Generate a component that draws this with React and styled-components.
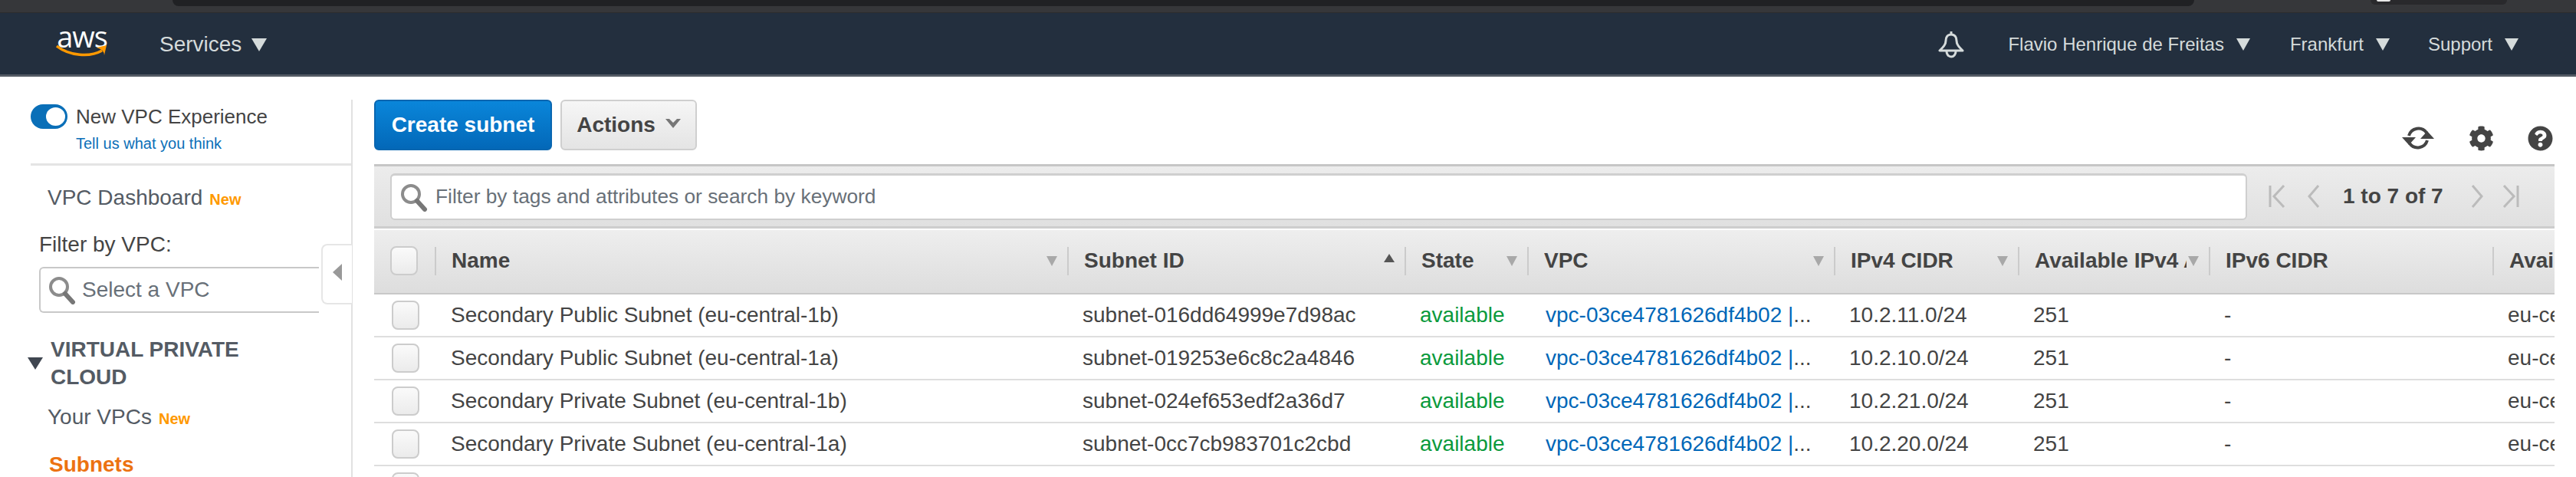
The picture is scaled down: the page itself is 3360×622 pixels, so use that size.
import React from 'react';
import styled, { createGlobalStyle } from 'styled-components';
import { FaCog, FaQuestionCircle } from 'react-icons/fa';

const GlobalStyle = createGlobalStyle`
  html, body {
    margin: 0;
    padding: 0;
    width: 3360px;
    height: 622px;
    overflow: hidden;
    background: #fff;
  }
  body {
    font-family: "Liberation Sans", Arial, sans-serif;
    color: #444;
  }
  * {
    box-sizing: border-box;
  }
`;

const Page = styled.div`
  width: 3360px;
  height: 622px;
  overflow: hidden;
  display: flex;
  flex-direction: column;
`;

// bit of the browser window that is left above the console
const BrowserStrip = styled.div`
  height: 17px;
  flex: none;
  background: #36373a;
  border-bottom: 1px solid #2b2c2e;
  display: flex;
  align-items: flex-start;
`;

const BrowserTab = styled.div`
  height: ${(p) => p.$height}px;
  background: ${(p) => p.$color};
  margin-left: ${(p) => p.$left}px;
  width: ${(p) => p.$width}px;
  border-radius: 0 0 12px 12px;
  padding-left: 8px;
`;

const TabGlint = styled.span`
  display: block;
  width: 18px;
  height: 2px;
  background: #e8e8e8;
  border-radius: 0 0 9px 9px;
`;

const Nav = styled.header`
  height: 83px;
  flex: none;
  background: #232f3e;
  border-bottom: 3px solid #545b64;
  padding-top: 2px;
  display: flex;
  align-items: center;
  color: #d5dbdb;
`;

const Logo = styled.div`
  width: 70px;
  margin-left: 72px;
  margin-right: 66px;
  display: flex;
  flex-direction: column;
  align-items: center;
  position: relative;
  top: -3px;
`;

const LogoWord = styled.span`
  font-family: "Open Sans", sans-serif;
  font-size: 38px;
  line-height: 26px;
  height: 24px;
  color: #fff;
  letter-spacing: -1px;
`;

const NavItem = styled.div`
  display: flex;
  align-items: center;
  gap: ${(p) => (p.$big ? 13 : 16)}px;
  font-size: ${(p) => (p.$big ? 28 : 24)}px;
  margin-left: ${(p) => p.$gap || 0}px;
`;

const Caret = styled.span`
  width: 0;
  height: 0;
  flex: none;
  border-left: ${(p) => p.$w / 2}px solid transparent;
  border-right: ${(p) => p.$w / 2}px solid transparent;
  border-top: ${(p) => p.$h}px solid ${(p) => p.$color || '#d5dbdb'};
`;

const NavSpacer = styled.div`
  flex: 1;
`;

const Bell = styled.svg`
  width: 36px;
  height: 36px;
  margin-right: 56px;
`;

const NavEnd = styled.div`
  width: 75px;
`;

const Content = styled.div`
  flex: 1;
  min-height: 0;
  display: flex;
  overflow: hidden;
`;

const Sidebar = styled.aside`
  width: 460px;
  flex: none;
  margin-top: 30px;
  border-right: 2px solid #e1e1e1;
  position: relative;
`;

const Experience = styled.div`
  margin-left: 40px;
  height: 86px;
  border-bottom: 3px solid #e4e4e4;
  display: grid;
  grid-template-columns: 48px 1fr;
  grid-auto-rows: min-content;
  column-gap: 11px;
  padding-top: 6px;
`;

const Toggle = styled.span`
  width: 48px;
  height: 32px;
  border-radius: 16px;
  background: #0a6fb8;
  display: flex;
  justify-content: flex-end;
  align-items: center;
  padding-right: 3px;
`;

const ToggleKnob = styled.span`
  width: 25px;
  height: 24px;
  border-radius: 50%;
  background: #fff;
`;

const ExperienceTitle = styled.div`
  font-size: 26px;
  line-height: 32px;
  color: #444;
`;

const FeedbackLink = styled.a`
  grid-column: 2;
  font-size: 20px;
  line-height: 24px;
  margin-top: 7px;
  color: #0a6fb8;
`;

const NavLink = styled.div`
  font-size: 28px;
  line-height: 32px;
  color: ${(p) => (p.$active ? '#ec7211' : '#545b64')};
  font-weight: ${(p) => (p.$active ? 700 : 400)};
  margin-left: ${(p) => (p.$active ? 64 : 62)}px;
  margin-top: ${(p) => p.$top}px;
`;

const NewTag = styled.span`
  font-size: 20px;
  font-weight: 700;
  color: #ff9900;
  margin-left: 9px;
`;

const FilterLabel = styled.div`
  font-size: 28px;
  line-height: 32px;
  color: #444;
  margin: 27px 0 13px 51px;
`;

const VpcSelect = styled.div`
  margin-left: 51px;
  width: 365px;
  height: 60px;
  border: 2px solid #c8c8c8;
  border-right: none;
  border-radius: 6px 0 0 6px;
  display: flex;
  align-items: center;
  padding-left: 9px;
  gap: 7px;
  font-size: 28px;
  color: #687078;
`;

const CollapseTab = styled.div`
  position: absolute;
  left: 419px;
  top: 188px;
  width: 40px;
  height: 79px;
  background: #fff;
  border: 2px solid #e6e6e6;
  border-right: none;
  border-radius: 8px 0 0 8px;
  display: flex;
  align-items: center;
  justify-content: center;
`;

const CollapseArrow = styled.span`
  width: 0;
  height: 0;
  border-top: 11px solid transparent;
  border-bottom: 11px solid transparent;
  border-right: 12px solid #999;
  margin-top: -6px;
`;

const Section = styled.div`
  margin: 30px 0 0 36px;
  display: flex;
  align-items: center;
  gap: 10px;
`;

const SectionTitle = styled.div`
  font-size: 28px;
  font-weight: 700;
  line-height: 36px;
  color: #545b64;
  width: 300px;
`;

const Main = styled.main`
  margin-left: 28px;
  width: 2844px;
  flex: none;
  padding-top: 30px;
`;

const Toolbar = styled.div`
  display: flex;
  align-items: flex-start;
  gap: 11px;
  height: 66px;
`;

const PrimaryButton = styled.button`
  width: 232px;
  height: 66px;
  border: 2px solid #0a66b0;
  border-radius: 6px;
  background: linear-gradient(#0a86da, #0368b8);
  color: #fff;
  font: 700 28px "Liberation Sans", Arial, sans-serif;
  padding: 0;
`;

const SecondaryButton = styled.button`
  width: 178px;
  height: 66px;
  border: 2px solid #cfcfcf;
  border-radius: 6px;
  background: linear-gradient(#f6f6f6, #e4e4e4);
  color: #444;
  font: 700 28px "Liberation Sans", Arial, sans-serif;
  display: flex;
  align-items: center;
  justify-content: center;
  gap: 13px;
  padding: 0;
`;

const Chevron = styled.svg`
  width: 20px;
  height: 13px;
  margin-top: -6px;
`;

const ToolIcons = styled.div`
  margin-left: auto;
  display: flex;
  align-items: center;
  height: 66px;
  padding-top: 34px;
  padding-right: 2px;
  color: #444;
  gap: 44px;
  font-size: 33px;
`;

const RefreshIcon = styled.svg`
  width: 44px;
  height: 36px;
`;

const FilterBar = styled.div`
  margin-top: 18px;
  height: 84px;
  background: linear-gradient(#ececec, #e0e0e0);
  border-top: 3px solid #c6c6c6;
  border-bottom: 3px solid #cdcdcd;
  display: flex;
  align-items: center;
  padding-left: 21px;
`;

const SearchBox = styled.div`
  width: 2422px;
  height: 61px;
  background: #fff;
  border: 2px solid #cfcfcf;
  border-top-width: 3px;
  border-radius: 6px;
  display: flex;
  align-items: center;
  padding-left: 10px;
  gap: 9px;
  font-size: 26.3px;
  color: #687078;
`;

const SearchSvg = styled.svg`
  width: 38px;
  height: 38px;
  flex: none;
`;

const Pager = styled.div`
  flex: 1;
  display: flex;
  align-items: center;
  padding-left: 28px;
  font-size: 28px;
  font-weight: 700;
  color: #444;
`;

const PagerCount = styled.span`
  margin: 0 35px 0 29px;
`;

const PagerIcon = styled.svg`
  width: ${(p) => p.$w}px;
  height: 30px;
  margin-left: ${(p) => p.$left}px;
`;

const columns = '79px 825px 440px 160px 400px 240px 249px 370px 200px';

const HeaderRow = styled.div`
  margin-top: 2px;
  height: 84px;
  display: grid;
  grid-template-columns: ${columns};
  align-items: center;
  background: linear-gradient(#eeeeee, #dddddd);
  border-bottom: 2px solid #c8c8c8;
  overflow: hidden;
  padding-bottom: 2px;
`;

const HeadCell = styled.div`
  height: 37px;
  border-left: 2px solid #cbcbcb;
  padding: 0 13px 0 20px;
  display: flex;
  align-items: center;
  gap: 2px;
  font-size: 28px;
  font-weight: 700;
  color: #444;
`;

const HeadLabel = styled.span`
  flex: 1;
  min-width: 0;
  overflow: hidden;
  white-space: nowrap;
`;

const SortUp = styled(Caret)`
  border-top: none;
  border-bottom: 11px solid #555;
  margin-top: -8px;
`;

const BoxCell = styled.div`
  padding-left: ${(p) => (p.$head ? 21 : 23)}px;
`;

const CheckBox = styled.span`
  display: block;
  width: 36px;
  height: 38px;
  border: 2px solid #cccccc;
  border-radius: 8px;
  background: linear-gradient(#fafafa, #ebebeb);
`;

const Row = styled.div`
  height: 56px;
  display: grid;
  grid-template-columns: ${columns};
  align-items: center;
  border-bottom: 2px solid #dedede;
  overflow: hidden;
`;

const Cell = styled.div`
  padding-left: ${(p) => p.$pad || 20}px;
  font-size: 28px;
  white-space: nowrap;
  color: ${(p) => p.$color || '#444'};
`;

const VpcLink = styled.span`
  color: #0067b8;
`;

const SearchGlyph = () => (
  <SearchSvg viewBox="0 0 38 38">
    <circle cx="15" cy="15" r="11" fill="none" stroke="#8c8c8c" strokeWidth="4" />
    <path d="M23 24 L33 35" stroke="#777" strokeWidth="6" strokeLinecap="round" />
  </SearchSvg>
);

const rows = [
  ['Secondary Public Subnet (eu-central-1b)', 'subnet-016dd64999e7d98ac', '10.2.11.0/24'],
  ['Secondary Public Subnet (eu-central-1a)', 'subnet-019253e6c8c2a4846', '10.2.10.0/24'],
  ['Secondary Private Subnet (eu-central-1b)', 'subnet-024ef653edf2a36d7', '10.2.21.0/24'],
  ['Secondary Private Subnet (eu-central-1a)', 'subnet-0cc7cb983701c2cbd', '10.2.20.0/24'],
];

const heads = [
  { label: 'Name', sort: 'down' },
  { label: 'Subnet ID', sort: 'up' },
  { label: 'State', sort: 'down' },
  { label: 'VPC', sort: 'down' },
  { label: 'IPv4 CIDR', sort: 'down' },
  { label: 'Available IPv4 Addresses', sort: 'down' },
  { label: 'IPv6 CIDR' },
  { label: 'Availability Zone' },
];

export default function App() {
  return (
    <Page>
      <GlobalStyle />
      <BrowserStrip>
        <BrowserTab $left={225} $width={2637} $height={8} $color="#202124" />
        <BrowserTab $left={230} $width={178} $height={6} $color="#29292c">
          <TabGlint />
        </BrowserTab>
      </BrowserStrip>

      <Nav>
        <Logo>
          <LogoWord>aws</LogoWord>
          <svg width="68" height="18" viewBox="0 0 68 18">
            <path d="M1 2 C18 15 44 17 60 8" fill="none" stroke="#ff9900" strokeWidth="3.4" />
            <path d="M53 4 L66 1 L63 14 Q63 7 53 4 Z" fill="#ff9900" />
          </svg>
        </Logo>
        <NavItem $big>
          Services
          <Caret $w={21} $h={17} />
        </NavItem>
        <NavSpacer />
        <Bell viewBox="0 0 36 36">
          <path
            d="M18 5 C13 5 11 9 11 13 C11 18 8 21 3 26 L33 26 C28 21 25 18 25 13 C25 9 23 5 18 5 Z"
            fill="none"
            stroke="#d5dbdb"
            strokeWidth="3"
            strokeLinejoin="round"
          />
          <path d="M18 1 V5" stroke="#d5dbdb" strokeWidth="3" />
          <path d="M12 27 A6 7 0 0 0 24 27" fill="none" stroke="#d5dbdb" strokeWidth="3" />
        </Bell>
        <NavItem>
          Flavio Henrique de Freitas
          <Caret $w={19} $h={16} />
        </NavItem>
        <NavItem $gap={52}>
          Frankfurt
          <Caret $w={19} $h={16} />
        </NavItem>
        <NavItem $gap={50}>
          Support
          <Caret $w={19} $h={16} />
        </NavItem>
        <NavEnd />
      </Nav>

      <Content>
        <Sidebar>
          <Experience>
            <Toggle>
              <ToggleKnob />
            </Toggle>
            <ExperienceTitle>New VPC Experience</ExperienceTitle>
            <FeedbackLink>Tell us what you think</FeedbackLink>
          </Experience>
          <NavLink $top={26}>
            VPC Dashboard
            <NewTag>New</NewTag>
          </NavLink>
          <FilterLabel>Filter by VPC:</FilterLabel>
          <VpcSelect>
            <SearchGlyph />
            Select a VPC
          </VpcSelect>
          <CollapseTab>
            <CollapseArrow />
          </CollapseTab>
          <Section>
            <Caret $w={20} $h={16} $color="#3f4650" />
            <SectionTitle>VIRTUAL PRIVATE CLOUD</SectionTitle>
          </Section>
          <NavLink $top={18}>
            Your VPCs
            <NewTag>New</NewTag>
          </NavLink>
          <NavLink $active $top={28}>
            Subnets
          </NavLink>
        </Sidebar>

        <Main>
          <Toolbar>
            <PrimaryButton>Create subnet</PrimaryButton>
            <SecondaryButton>
              Actions
              <Chevron viewBox="0 0 20 13">
                <path d="M0 1 L5 1 L10 6 L15 1 L20 1 L10 13 Z" fill="#777" />
              </Chevron>
            </SecondaryButton>
            <ToolIcons>
              <RefreshIcon viewBox="0 0 44 36">
                <path d="M10 15 A13 13 0 0 1 33 11" fill="none" stroke="#444" strokeWidth="4" />
                <path d="M34 21 A13 13 0 0 1 11 25" fill="none" stroke="#444" strokeWidth="4" />
                <path d="M1 17 L19 17 L10 27 Z M25 19 L43 19 L34 9 Z" fill="#444" />
              </RefreshIcon>
              <FaCog />
              <FaQuestionCircle />
            </ToolIcons>
          </Toolbar>

          <FilterBar>
            <SearchBox>
              <SearchGlyph />
              Filter by tags and attributes or search by keyword
            </SearchBox>
            <Pager>
              <PagerIcon $w={22} $left={0} viewBox="0 0 22 30">
                <path d="M2 1 V29 M20 1 L7 15 L20 29" fill="none" stroke="#bbb" strokeWidth="3" />
              </PagerIcon>
              <PagerIcon $w={18} $left={28} viewBox="0 0 18 30">
                <path d="M15 1 L3 15 L15 29" fill="none" stroke="#bbb" strokeWidth="3" />
              </PagerIcon>
              <PagerCount>1 to 7 of 7</PagerCount>
              <PagerIcon $w={18} $left={0} viewBox="0 0 18 30">
                <path d="M3 1 L15 15 L3 29" fill="none" stroke="#bbb" strokeWidth="3" />
              </PagerIcon>
              <PagerIcon $w={22} $left={24} viewBox="0 0 22 30">
                <path d="M20 1 V29 M2 1 L15 15 L2 29" fill="none" stroke="#bbb" strokeWidth="3" />
              </PagerIcon>
            </Pager>
          </FilterBar>

          <HeaderRow>
            <BoxCell $head>
              <CheckBox />
            </BoxCell>
            {heads.map((h) => (
              <HeadCell key={h.label}>
                <HeadLabel>{h.label}</HeadLabel>
                {h.sort === 'down' && <Caret $w={15} $h={13} $color="#a8a8a8" />}
                {h.sort === 'up' && <SortUp $w={15} $h={0} />}
              </HeadCell>
            ))}
          </HeaderRow>

          {rows.map(([name, id, cidr]) => (
            <Row key={id}>
              <BoxCell>
                <CheckBox />
              </BoxCell>
              <Cell $pad={21}>{name}</Cell>
              <Cell>{id}</Cell>
              <Cell $color="#0a9a3c">available</Cell>
              <Cell $pad={24}>
                <VpcLink>vpc-03ce4781626df4b02 |</VpcLink>...
              </Cell>
              <Cell>{cidr}</Cell>
              <Cell>251</Cell>
              <Cell>-</Cell>
              <Cell>eu-central-1b</Cell>
            </Row>
          ))}
          <Row>
            <BoxCell>
              <CheckBox />
            </BoxCell>
          </Row>
        </Main>
      </Content>
    </Page>
  );
}
